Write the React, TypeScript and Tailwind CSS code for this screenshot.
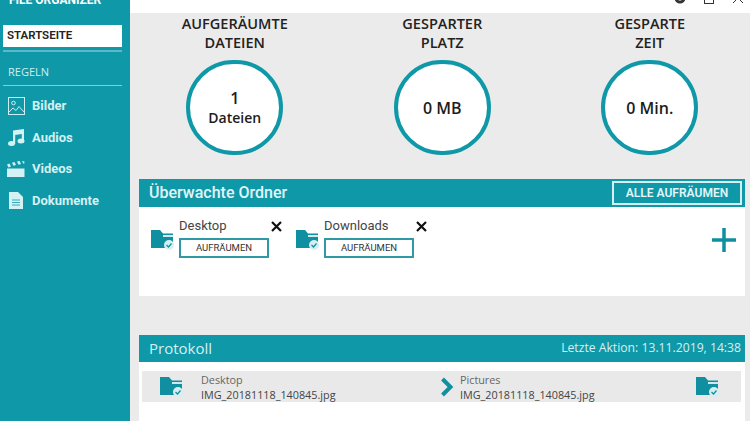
import React from "react";

const teal = "bg-[#0f98a8]";

const FolderIcon = () => (
  <svg width="24" height="22" viewBox="0 0 24 22" className="shrink-0">
    <path d="M0 1h9l3 3.5h10V19H0z" fill="#0f8fa0" />
    <path d="M12 6h10v2H12z" fill="#cfe9ee" />
    <circle cx="18" cy="16" r="5" fill="#d5eef2" />
    <path d="M15.5 16l2 2 3-3.5" stroke="#0f8fa0" strokeWidth="1.2" fill="none" />
  </svg>
);

const Stat = ({ title, value, sub }: { title: string[]; value: string; sub?: string }) => (
  <div className="flex flex-col items-center w-[207.5px] shrink-0">
    <div className="h-[44px] pt-[1px] text-center text-[14.5px] leading-[19px] font-semibold text-[#222]">
      {title.map((t) => (
        <div key={t}>{t}</div>
      ))}
    </div>
    <div className="mt-[3px] w-[97px] h-[95px] rounded-full border-[4px] border-[#0f98a8] bg-white flex flex-col items-center justify-center text-[#1c1c1c] font-semibold">
      <span className="text-[16px] leading-[20px]">{value}</span>
      {sub && <span className="text-[14px] leading-[20px]">{sub}</span>}
    </div>
  </div>
);

const WatchedFolder = ({ name }: { name: string }) => (
  <div className="flex items-start gap-[4px]">
    <div className="mt-[12px]">
      <FolderIcon />
    </div>
    <div className="w-[103px]">
      <div className="flex justify-between items-center h-[18px] text-[13px] text-[#444] font-['Roboto',sans-serif]">
        <span>{name}</span>
        <svg width="11" height="11" viewBox="0 0 11 11">
          <path d="M1 1l9 9M10 1l-9 9" stroke="#111" strokeWidth="2.2" />
        </svg>
      </div>
      <div className="mt-[3px] w-[90px] h-[20px] border-2 border-[#2f9aa4] flex items-center justify-center text-[9.5px] text-[#333] font-['Roboto',sans-serif]">
        AUFRÄUMEN
      </div>
    </div>
  </div>
);

const NavItem = ({ icon, label }: { icon: React.ReactNode; label: string }) => (
  <div className="flex items-center h-[31.5px] pl-[4px]">
    <div className="w-[18px] flex justify-center">{icon}</div>
    <span className="ml-[7px] text-[13px] font-bold text-[#d4f1f4] font-['Roboto',sans-serif]">{label}</span>
  </div>
);

const LogPath = ({ dir }: { dir: string }) => (
  <div className="text-[10.8px] leading-[15px] text-[#444] font-['Open_Sans',sans-serif]">
    <div className="text-[#666]">{dir}</div>
    <div>IMG_20181118_140845.jpg</div>
  </div>
);

export default function App() {
  return (
    <div className="w-[750px] h-[421px] overflow-hidden flex bg-white font-['Open_Sans',sans-serif]">
      {/* Sidebar */}
      <aside className={`w-[130px] h-full shrink-0 ${teal} px-[3px]`}>
        <div className="h-[6px] flex items-end pl-[6px]">
          <span className="text-[12px] leading-[16px] -mb-[2px] font-bold text-white whitespace-nowrap font-['Roboto',sans-serif]">
            FILE ORGANIZER
          </span>
        </div>
        <div className="mt-[19px] h-[22px] w-[119px] bg-white flex items-center pl-[4px] text-[11.5px] font-semibold text-[#222] font-['Roboto',sans-serif]">
          STARTSEITE
        </div>
        <div className="mt-[3px] h-[2px] w-[119px] bg-[#5fb9c4]" />
        <div className="mt-[9px] h-[22px] pl-[5px] flex items-center text-[11px] text-[#cdeef2] font-['Open_Sans',sans-serif]">
          REGELN
        </div>
        <div className="mt-[2px] h-[1px] w-[119px] bg-[#7fd0da]" />
        <div className="mt-[4px]">
          <NavItem
            label="Bilder"
            icon={
              <svg width="17" height="18" viewBox="0 0 17 18" fill="none" stroke="#cdeef2" strokeWidth="1">
                <rect x="0.5" y="0.5" width="16" height="17" />
                <circle cx="5.5" cy="6" r="1.8" />
                <path d="M1 15l4-4 3 2.5 3-4 5 5.5" />
              </svg>
            }
          />
          <NavItem
            label="Audios"
            icon={
              <svg width="17" height="17" viewBox="0 0 17 17" fill="#d4f1f4">
                <path d="M5 1.5L16 0v12h-2.2V5L7.2 6V15H5z" />
                <ellipse cx="3.5" cy="14.5" rx="3.5" ry="2.5" />
                <ellipse cx="13" cy="12" rx="3.5" ry="2.5" />
              </svg>
            }
          />
          <NavItem
            label="Videos"
            icon={
              <svg width="18" height="16" viewBox="0 0 18 16" fill="#d4f1f4">
                <path d="M0 7.5h17.5V16H0z" />
                <path d="M0 3.5l2.5-1 1.5 3-2.5 1zM5 1.8l2.5-.8 1.5 3-2.5.8zM10 .6l2.5-.6L14 3l-2.5.7zM15 0l2.5.5-.3 2.2-.9-.1z" />
              </svg>
            }
          />
          <NavItem
            label="Dokumente"
            icon={
              <svg width="14" height="17" viewBox="0 0 14 17">
                <path d="M0 0h9l5 5v12H0z" fill="#d4f1f4" />
                <path d="M3 8h8M3 10.5h8M3 13h8" stroke="#0f98a8" strokeWidth="0.8" />
              </svg>
            }
          />
        </div>
      </aside>

      {/* Main */}
      <main className="flex-1 flex flex-col min-w-0">
        <div className="h-[13px] shrink-0 bg-white flex justify-end items-start gap-[18px] pr-[6px] overflow-hidden">
          <svg width="12" height="12" viewBox="0 0 12 12" className="-mt-[8px]">
            <circle cx="6" cy="6" r="4" fill="none" stroke="#333" strokeWidth="3" />
          </svg>
          <div className="w-[10px] h-[10px] border border-[#333] -mt-[6px]" />
          <svg width="12" height="12" viewBox="0 0 12 12" className="-mt-[8px]">
            <path d="M1 1l10 10M11 1L1 11" stroke="#333" />
          </svg>
        </div>
        <div className="flex-1 bg-[#ebebeb] pl-[9px] pr-[5px]">
          <div className="flex -ml-[8px]">
            <Stat title={["AUFGERÄUMTE", "DATEIEN"]} value="1" sub="Dateien" />
            <Stat title={["GESPARTER", "PLATZ"]} value="0 MB" />
            <Stat title={["GESPARTE", "ZEIT"]} value="0 Min." />
          </div>

          {/* Ueberwachte Ordner */}
          <section className="mt-[24px]">
            <div className={`h-[28px] ${teal} flex items-center justify-between pl-[10px] pr-[3px]`}>
              <span className="text-[16px] font-medium text-[#e2f6f8] font-['Roboto',sans-serif]">Überwachte Ordner</span>
              <div className="w-[130px] h-[24px] border-2 border-[#d5f0f3] flex items-center justify-center text-[12px] font-semibold text-[#e2f6f8] font-['Roboto',sans-serif]">
                ALLE AUFRÄUMEN
              </div>
            </div>
            <div className="h-[89px] bg-white flex items-start pl-[12px] pr-[8px] pt-[10px]">
              <div className="flex gap-[14px]">
                <WatchedFolder name="Desktop" />
                <WatchedFolder name="Downloads" />
              </div>
              <svg width="26" height="26" viewBox="0 0 26 26" className="ml-auto mt-[10px]">
                <path d="M13 1v24M1 13h24" stroke="#0f8fa0" strokeWidth="3.5" />
              </svg>
            </div>
          </section>

          {/* Protokoll */}
          <section className="mt-[39px]">
            <div className={`h-[27px] ${teal} flex items-center justify-between pl-[10px] pr-[4px]`}>
              <span className="text-[15px] text-[#d5f0f3] font-['Open_Sans',sans-serif]">Protokoll</span>
              <span className="text-[12.2px] text-[#d5f0f3] font-['Open_Sans',sans-serif]">Letzte Aktion: 13.11.2019, 14:38</span>
            </div>
            <div className="h-[59px] bg-white pt-[9px] pl-[3px] pr-[4px]">
              <div className="h-[31px] bg-[#e9e9e9] flex items-center pl-[18px] pr-[21px]">
                <FolderIcon />
                <div className="ml-[17px] w-[240px]">
                  <LogPath dir="Desktop" />
                </div>
                <svg width="14" height="20" viewBox="0 0 14 20" className="ml-[-1px]">
                  <path d="M2.5 2l8 8-8 8" fill="none" stroke="#0f8fa0" strokeWidth="4" />
                </svg>
                <div className="ml-[6px]">
                  <LogPath dir="Pictures" />
                </div>
                <div className="ml-auto">
                  <FolderIcon />
                </div>
              </div>
            </div>
          </section>
        </div>
      </main>
    </div>
  );
}
